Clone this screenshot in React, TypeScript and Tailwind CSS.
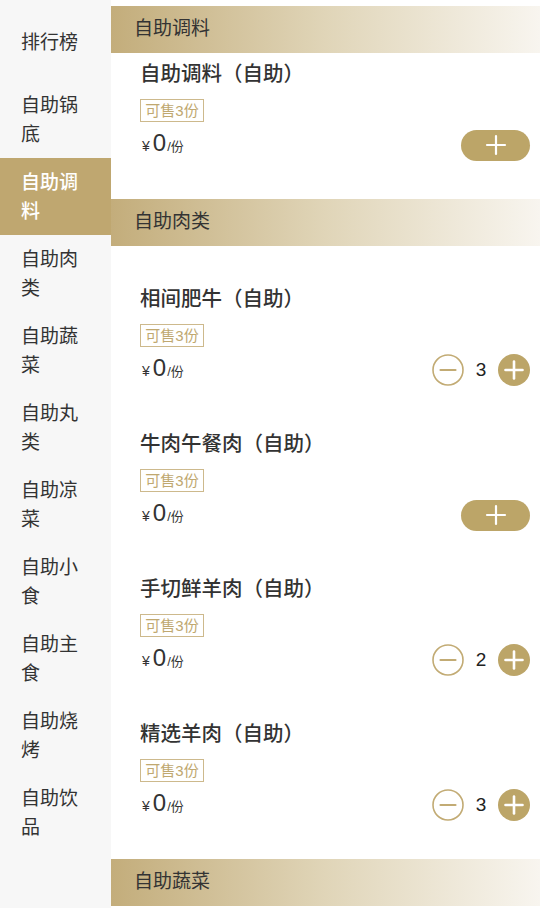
import React from "react";

const FONT = { fontFamily: "'Liberation Sans', 'Noto Sans CJK SC', sans-serif" };

const cats = ["排行榜", "自助锅底", "自助调料", "自助肉类", "自助蔬菜", "自助丸类", "自助凉菜", "自助小食", "自助主食", "自助烧烤", "自助饮品"];

type Item = { name: string; qty: number };

function MinusBtn() {
  return (
    <svg width="32" height="32" viewBox="0 0 32 32">
      <circle cx="16" cy="16" r="15" fill="none" stroke="#c2ab74" strokeWidth="1.6" />
      <line x1="8.5" y1="16" x2="23.5" y2="16" stroke="#c2ab74" strokeWidth="2.2" strokeLinecap="round" />
    </svg>
  );
}

function PlusBtn() {
  return (
    <svg width="32" height="32" viewBox="0 0 32 32">
      <circle cx="16" cy="16" r="16" fill="#bca568" />
      <line x1="7.5" y1="16" x2="24.5" y2="16" stroke="#fff" strokeWidth="2.6" strokeLinecap="round" />
      <line x1="16" y1="7.5" x2="16" y2="24.5" stroke="#fff" strokeWidth="2.6" strokeLinecap="round" />
    </svg>
  );
}

function Product({ item }: { item: Item }) {
  return (
    <div className="flex flex-col pl-[29px] pr-[10px]">
      <div className="text-[20.5px] leading-[28px] font-medium text-[#333333]">{item.name}</div>
      <div className="mt-[11px] flex">
        <div className="h-[23px] w-[64px] border border-[#cdb98c] text-[15px] leading-[21px] text-[#c0a870] text-center">可售3份</div>
      </div>
      <div className="mt-[7px] flex h-[32px] items-center justify-between">
        <div className="-mt-[5px] flex items-baseline text-[#333333] pl-[2px]">
          <span className="text-[14px]">¥</span>
          <span className="text-[24px] leading-[28px] ml-[3px]">0</span>
          <span className="text-[13px] ml-[1px]">/份</span>
        </div>
        {item.qty === 0 ? (
          <div className="flex h-[31px] w-[69px] items-center justify-center rounded-full bg-[#bca568]">
            <svg width="22" height="22" viewBox="0 0 22 22">
              <line x1="2" y1="11" x2="20" y2="11" stroke="#fff" strokeWidth="2.2" strokeLinecap="round" />
              <line x1="11" y1="2" x2="11" y2="20" stroke="#fff" strokeWidth="2.2" strokeLinecap="round" />
            </svg>
          </div>
        ) : (
          <div className="flex items-center">
            <MinusBtn />
            <span className="w-[34px] text-center text-[19px] text-[#222222]">{item.qty}</span>
            <PlusBtn />
          </div>
        )}
      </div>
    </div>
  );
}

function Header({ title }: { title: string }) {
  return (
    <div className="flex h-[47px] shrink-0 items-center bg-gradient-to-r from-[#c3ad7b] via-[#e0d5b8] to-[#f8f5ef] pl-[23px] text-[19px] text-[#333333]">
      {title}
    </div>
  );
}

export default function App() {
  const meat: Item[] = [
    { name: "相间肥牛（自助）", qty: 3 },
    { name: "牛肉午餐肉（自助）", qty: 0 },
    { name: "手切鲜羊肉（自助）", qty: 2 },
    { name: "精选羊肉（自助）", qty: 3 },
  ];
  return (
    <div className="flex h-[908px] w-[540px] overflow-hidden bg-white" style={FONT}>
      <div className="flex w-[111px] shrink-0 flex-col bg-[#f7f7f7] pt-[4px]">
        {cats.map((c, i) => (
          <div
            key={c}
            className={
              i === 2
                ? "flex h-[77px] shrink-0 items-center bg-[#bfa770] pl-[21px] text-[19px] leading-[29px] font-medium text-white"
                : "flex h-[77px] shrink-0 items-center pl-[21px] text-[19px] leading-[29px] text-[#333333]"
            }
          >
            <span className="block w-[62px]">{c}</span>
          </div>
        ))}
      </div>
      <div className="flex flex-1 flex-col pt-[6px]">
        <Header title="自助调料" />
        <div className="pt-[7px] pb-[38px]">
          <Product item={{ name: "自助调料（自助）", qty: 0 }} />
        </div>
        <Header title="自助肉类" />
        <div className="flex flex-col gap-[44px] pt-[39px] pb-[38px]">
          {meat.map((m) => (
            <Product key={m.name} item={m} />
          ))}
        </div>
        <Header title="自助蔬菜" />
      </div>
    </div>
  );
}
